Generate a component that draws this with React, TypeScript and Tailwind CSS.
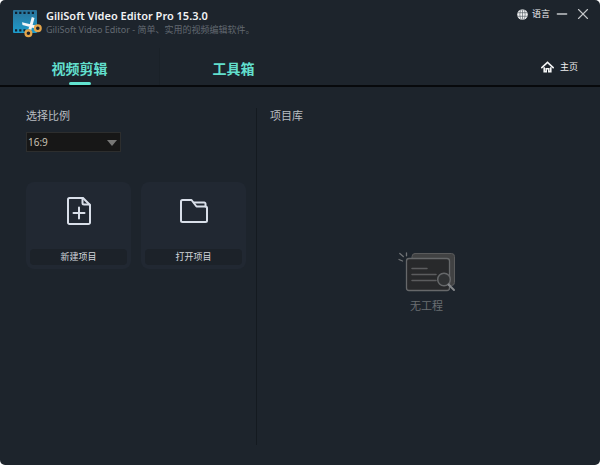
import { useState } from "react"
import { Minus, X } from "lucide-react"

const tabs = [
  { id: "edit", label: "视频剪辑" },
  { id: "tools", label: "工具箱" },
]

const ratios = ["16:9", "9:16", "4:3", "1:1"]

function LogoIcon() {
  return (
    <svg viewBox="0 0 30 30" className="h-[30px] w-[30px] shrink-0" aria-hidden="true">
      <defs>
        <linearGradient id="film" x1="0" y1="0" x2="0" y2="1">
          <stop offset="0" stopColor="#2a7299" />
          <stop offset="1" stopColor="#1d9ccc" />
        </linearGradient>
      </defs>
      <rect x="1" y="2" width="24" height="23" rx="1" fill="url(#film)" />
      <path d="M3 4.8h21M3 22.3h12" stroke="#10202f" strokeWidth="2.2" strokeDasharray="2.2 2" />
      <path d="m19.8 9 2.7 1-3.2 12-2.8-1ZM10 14.300l13.5 3.2-.8 2.8L10.5 17Z" fill="#f3f6f8" />
      <circle cx="16.4" cy="25.3" r="2.900" fill="#1d232b" stroke="#e5a54a" strokeWidth="2.2" />
      <circle cx="25.8" cy="20.2" r="2.900" fill="#1d232b" stroke="#e5a54a" strokeWidth="2.2" />
    </svg>
  )
}

function GlobeIcon() {
  return (
    <svg viewBox="0 0 11 11" className="h-[11px] w-[11px]" aria-hidden="true">
      <circle cx="5.5" cy="5.5" r="5.3" fill="#f0f1f2" />
      <path
        d="M.5 3.7h10M.5 7.3h10M5.5.4v10.2M4.2.5C2.4 3 2.4 8 4.2 10.5M6.8.5C8.6 3 8.6 8 6.8 10.5"
        stroke="#4a525b"
        strokeWidth=".6"
        fill="none"
      />
    </svg>
  )
}

function HomeIcon() {
  return (
    <svg viewBox="0 0 13 12" className="h-3 w-[13px]" aria-hidden="true">
      <path d="M.8 6.6 6.5 1.4l5.7 5.2" fill="none" stroke="#f4f5f6" strokeWidth="1.6" strokeLinecap="round" />
      <path d="M3.2 6.2v4.4h2V7.8h2.6v2.8h2V6.2" fill="none" stroke="#f4f5f6" strokeWidth="1.6" />
    </svg>
  )
}

function NewFileIcon() {
  return (
    <svg
      viewBox="0 0 26 30"
      className="h-[30px] w-[26px]"
      fill="none"
      stroke="#d9dfe9"
      strokeWidth="2"
      strokeLinecap="round"
      strokeLinejoin="round"
      aria-hidden="true"
    >
      <path d="M3.5 2H17l7 7v17.5a1.5 1.5 0 0 1-1.5 1.5h-19A1.5 1.5 0 0 1 2 26.5v-23A1.5 1.5 0 0 1 3.5 2Z" />
      <path d="M16.5 2v5A1.5 1.5 0 0 0 18 8.5h5.5M13 11.5v11M7.5 17h11" />
    </svg>
  )
}

function FolderIcon() {
  return (
    <svg
      viewBox="0 0 28 24"
      className="h-6 w-7"
      fill="none"
      stroke="#d9dfe9"
      strokeWidth="2"
      strokeLinecap="round"
      strokeLinejoin="round"
      aria-hidden="true"
    >
      <path d="M2.5 1h9l5 6.5h9A1.5 1.5 0 0 1 27 9v12.5a1.5 1.5 0 0 1-1.5 1.5h-23A1.5 1.5 0 0 1 1 21.5v-19A1.5 1.5 0 0 1 2.5 1Z" />
      <path d="M14 3.5h10.3a1.2 1.2 0 0 1 1.2 1.2v2.8" />
    </svg>
  )
}

function EmptyIcon() {
  return (
    <svg viewBox="0 0 58 42" className="h-[42px] w-[58px]" fill="none" strokeLinecap="round" aria-hidden="true">
      <rect x="14" y="1.5" width="42.500" height="32" rx="3" fill="#414243" stroke="#5a5b5c" />
      <rect x="8.5" y="6.5" width="43" height="32" rx="2.5" fill="#28292b" stroke="#66686a" strokeWidth="1.3" />
      <path d="M14 16.5h15M14 22.5h24M14 28.5h24" stroke="#5b5c5e" strokeWidth="1.5" />
      <path d="M1 7.500 4.5 9M1.8 1.5l3.5 3M8.5.8v3" stroke="#707376" strokeWidth="1.3" />
      <circle cx="46" cy="27.5" r="6.3" fill="#303234" stroke="#66686a" strokeWidth="1.5" />
      <path d="m50.5 32.5 5.5 5.5" stroke="#85888b" strokeWidth="2" />
    </svg>
  )
}

const actions = [
  { label: "新建项目", icon: <NewFileIcon /> },
  { label: "打开项目", icon: <FolderIcon /> },
]

export default function App() {
  const [activeTab, setActiveTab] = useState("edit")
  const [ratio, setRatio] = useState("16:9")

  return (
    <div className="min-h-screen bg-white font-['Noto_Sans','Noto_Sans_CJK_SC',sans-serif] text-[#b9bdc1]">
      <div className="flex min-h-screen flex-col rounded-[5px] bg-[#1d242c]">
        <header className="border-b-2 border-[#07090c]">
          {/* Title bar */}
          <div className="flex h-12 items-start justify-between pl-3 pr-2">
            <div className="flex items-start gap-1 pt-2">
              <LogoIcon />
              <div>
                <h1 className="text-[11px] font-semibold leading-4 text-[#f2f3f4]">GiliSoft Video Editor Pro 15.3.0</h1>
                <p className="text-[9px] leading-3 text-[#626971]">GiliSoft Video Editor - 简单、实用的视频编辑软件。</p>
              </div>
            </div>
            <div className="flex h-7 items-center gap-1 text-[#c3c6c9]">
              <button type="button" className="flex items-center gap-1 text-[9px] leading-4 text-[#f0f1f2]">
                <GlobeIcon />
                语言
              </button>
              <button type="button" aria-label="最小化">
                <Minus className="h-4 w-4" strokeWidth={2} />
              </button>
              <button type="button" aria-label="关闭">
                <X className="h-[18px] w-[18px]" strokeWidth={1.5} />
              </button>
            </div>
          </div>

          {/* Tabs */}
          <div className="flex h-[37px] items-center justify-between pr-[22px]">
            <nav className="flex h-full items-center">
              {tabs.map((tab) => (
                <button
                  key={tab.id}
                  type="button"
                  onClick={() => setActiveTab(tab.id)}
                  className="relative h-full w-40 border-r border-[#1a2128] pt-1 text-[14px] font-semibold leading-5 text-[#62dfcd] last:w-[148px] last:border-transparent"
                >
                  {tab.label}
                  {activeTab === tab.id && (
                    <span className="absolute bottom-0 left-1/2 h-[3px] w-[22px] -translate-x-1/2 rounded-full bg-[#62e3d0]" />
                  )}
                </button>
              ))}
            </nav>
            <a href="#home" className="flex items-center gap-[6px] text-[9px] leading-4 text-[#f0f1f2]">
              <HomeIcon />
              主页
            </a>
          </div>
        </header>

        <main className="flex flex-1 pb-5 pt-[21px]">
          <section className="w-[257px] shrink-0 border-r border-[#141a20] pl-[26px]">
            <label htmlFor="ratio" className="block text-[11px] leading-4">
              选择比例
            </label>
            <div className="relative mt-2 w-[95px]">
              <select
                id="ratio"
                value={ratio}
                onChange={(e) => setRatio(e.target.value)}
                className="block h-5 w-full appearance-none border border-[#2d2e2e] bg-[#171717] pl-px text-[10px] leading-4 text-[#c9c2b3]"
              >
                {ratios.map((item) => (
                  <option key={item}>{item}</option>
                ))}
              </select>
              <svg viewBox="0 0 10 6" className="pointer-events-none absolute right-1 top-2 h-[6px] w-[10px]" aria-hidden="true">
                <path d="M0 0h10L5 6Z" fill="#777776" />
              </svg>
            </div>

            <div className="mt-[30px] flex gap-[10px]">
              {actions.map((action) => (
                <button
                  key={action.label}
                  type="button"
                  className="flex h-[87px] w-[105px] flex-col justify-between rounded-lg bg-[#212832] px-1 pb-1"
                >
                  <span className="flex h-[58px] w-full items-center justify-center">{action.icon}</span>
                  <span className="w-full rounded bg-[#1c2229] text-center text-[9px] leading-4 text-[#d4d8dd]">
                    {action.label}
                  </span>
                </button>
              ))}
            </div>
          </section>

          <section className="flex min-w-0 flex-1 flex-col">
            <h2 className="pl-[13px] text-[11px] leading-4">项目库</h2>
            <div className="flex flex-1 flex-col items-center justify-center gap-1 pb-1 pr-1 text-[#6a6e72]">
              <EmptyIcon />
              <p className="text-[11px] leading-4">无工程</p>
            </div>
          </section>
        </main>
      </div>
    </div>
  )
}
